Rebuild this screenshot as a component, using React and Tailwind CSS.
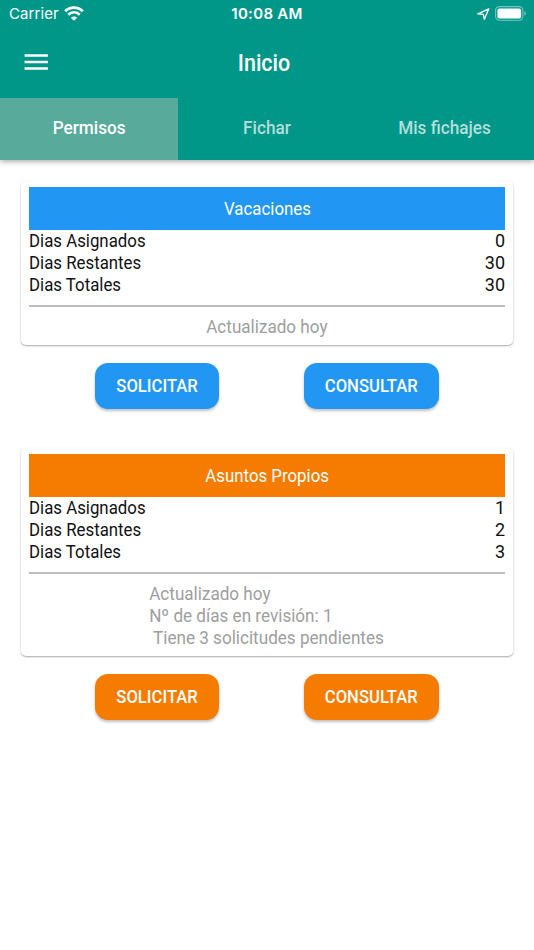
const TABS = ['Permisos', 'Fichar', 'Mis fichajes'];

const PERMISOS = [
  {
    title: 'Vacaciones',
    color: 'bg-[#2196f3]',
    asignados: 0,
    restantes: 30,
    totales: 30,
    notes: ['Actualizado hoy'],
  },
  {
    title: 'Asuntos Propios',
    color: 'bg-[#f57c00]',
    asignados: 1,
    restantes: 2,
    totales: 3,
    notes: ['Actualizado hoy', 'Nº de días en revisión: 1', ' Tiene 3 solicitudes pendientes'],
  },
];

function WifiIcon() {
  return (
    <svg className="w-5 h-[15px] -mt-0.5" viewBox="0 0 20 15" fill="none" stroke="white" strokeWidth="2.7">
      <path d="M1.2 5.2 A12.4 12.4 0 0 1 18.8 5.2" />
      <path d="M4.3 8.7 A7.9 7.9 0 0 1 15.7 8.7" />
      <path d="M10 14.8 L6.9 11.7 A4.4 4.4 0 0 1 13.1 11.7 Z" fill="white" stroke="none" />
    </svg>
  );
}

function LocationIcon() {
  return (
    <svg className="w-[13px] h-3 -mt-px" viewBox="0 0 13 12" fill="none" stroke="white" strokeWidth="1.3" strokeLinejoin="round">
      <path d="M11.8 0.8 L0.9 5.9 L6.3 6.4 L7.4 11.3 Z" />
    </svg>
  );
}

function BatteryIcon() {
  return (
    <svg className="w-8 h-[15px] -mt-0.5" viewBox="0 0 32 15" fill="none">
      <rect x="0.6" y="0.6" width="27.3" height="13.6" rx="3.6" stroke="white" strokeOpacity="0.45" strokeWidth="1.1" />
      <rect x="2.4" y="2.4" width="23.7" height="10" rx="2" fill="white" />
      <path d="M29.4 5.2 Q30.9 6 30.9 7.4 Q30.9 8.8 29.4 9.6 Z" fill="white" fillOpacity="0.5" />
    </svg>
  );
}

function MenuIcon() {
  return (
    <svg className="w-6 h-4" viewBox="0 0 24 16" fill="white">
      <path d="M0.6 0.2h23.3v2.6H0.6zM0.6 6.7h23.3v2.6H0.6zM0.6 13.2h23.3v2.6H0.6z" />
    </svg>
  );
}

function StatusBar() {
  return (
    <div className="grid grid-cols-3 items-center h-7 pl-[9px] pr-[7px] font-['Inter',sans-serif] text-[15px] text-white">
      <div className="flex items-center gap-[5px]">
        <span className="tracking-[0.1px]">Carrier</span>
        <WifiIcon />
      </div>
      <div className="pr-0.5 text-center font-semibold tracking-[0.3px]">10:08 AM</div>
      <div className="flex items-center justify-end gap-[5px]">
        <LocationIcon />
        <BatteryIcon />
      </div>
    </div>
  );
}

function Row({ label, value }) {
  return (
    <div className="flex justify-between">
      <span className="inline-block origin-left scale-x-[0.935]">{label}</span>
      <span>{value}</span>
    </div>
  );
}

function ActionButton({ className, children }) {
  return (
    <button className={`h-[46px] rounded-[13px] text-white font-medium shadow-[0_2px_3px_rgba(0,0,0,0.25)] ${className}`}>
      <span className="inline-block scale-x-[0.925]">{children}</span>
    </button>
  );
}

function PermisoSection({ permiso }) {
  return (
    <section>
      <div className="mx-[21px] px-2 pt-1.5 pb-[7px] rounded-[5px] bg-white shadow-[0_1px_2px_rgba(0,0,0,0.35)]">
        <div className={`h-[43px] flex items-center justify-center text-white ${permiso.color}`}>
          <span className="inline-block scale-x-[0.935]">{permiso.title}</span>
        </div>
        <Row label="Dias Asignados" value={permiso.asignados} />
        <Row label="Dias Restantes" value={permiso.restantes} />
        <Row label="Dias Totales" value={permiso.totales} />
        <div className="mt-[9px] mb-[9px] h-0.5 bg-[#bdbdbd]" />
        <div className="flex justify-center text-[#9e9e9e]">
          <div className="scale-x-[0.95]">
            {permiso.notes.map(note => (
              <div key={note} className="whitespace-pre">{note}</div>
            ))}
          </div>
        </div>
      </div>
      <div className="flex justify-between mt-[18px] px-[95px]">
        <ActionButton className={`w-[124px] ${permiso.color}`}>SOLICITAR</ActionButton>
        <ActionButton className={`w-[135px] ${permiso.color}`}>CONSULTAR</ActionButton>
      </div>
    </section>
  );
}

export default function App() {
  return (
    <div className="min-h-screen bg-white font-['Roboto',sans-serif] text-[18px] leading-[22px] text-[#111]">
      <header className="bg-[#009688] shadow-[0_1px_6px_rgba(0,0,0,0.4)]">
        <StatusBar />
        <div className="grid grid-cols-3 items-center h-[70px] px-6">
          <button className="w-6 -mt-0.5" aria-label="Menu">
            <MenuIcon />
          </button>
          <h1 className="pt-0.5 pr-[5px] text-center text-[23px] font-medium text-white">
            <span className="inline-block scale-x-[0.935]">Inicio</span>
          </h1>
        </div>
        <nav className="grid grid-cols-3 h-[62px]">
          {TABS.map((tab, i) => (
            <button key={tab} className={`pb-0.5 font-medium ${i === 0 ? 'bg-[#58aa9a] text-white' : 'text-[#b2dfdb]'}`}>
              <span className="inline-block scale-x-[0.955]">{tab}</span>
            </button>
          ))}
        </nav>
      </header>

      <main className="flex flex-col gap-[39px] pt-[21px]">
        {PERMISOS.map(p => <PermisoSection key={p.title} permiso={p} />)}
      </main>
    </div>
  );
}
